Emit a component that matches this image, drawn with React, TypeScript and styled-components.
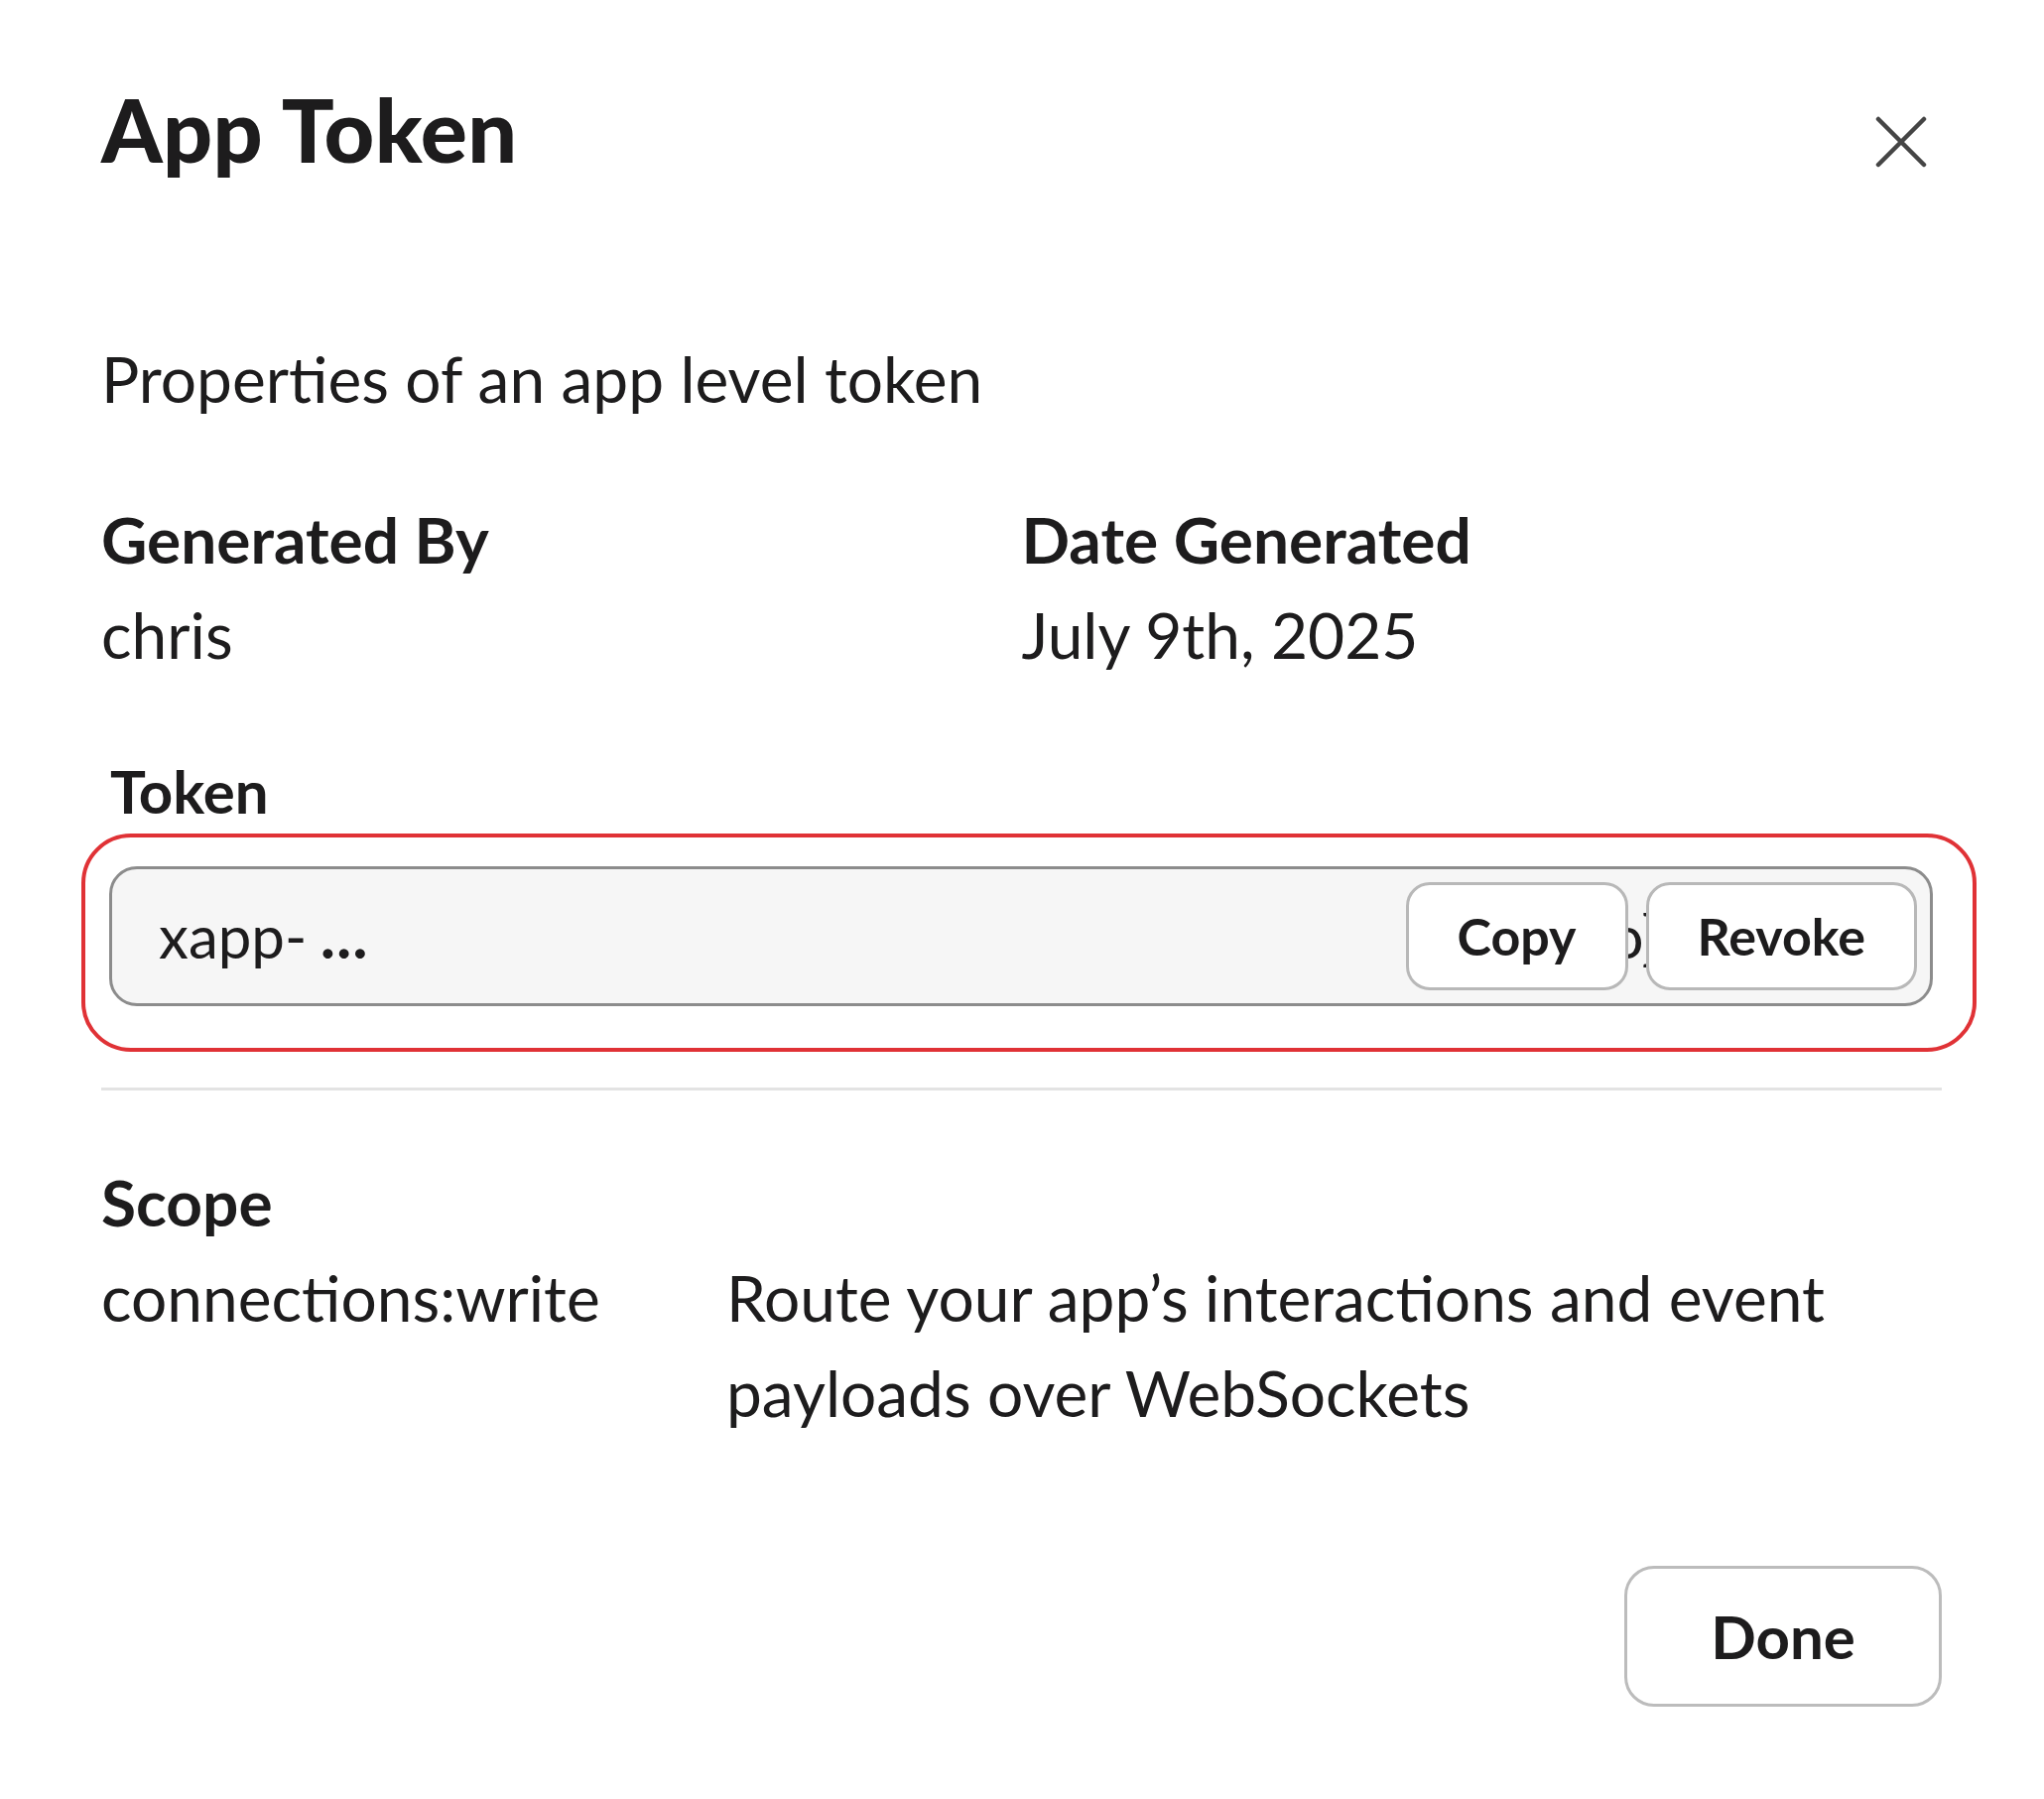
import React from "react";
import styled, { createGlobalStyle } from "styled-components";

const GlobalStyle = createGlobalStyle`
  html, body {
    margin: 0;
    padding: 0;
    background: #ffffff;
  }
  body {
    font-family: Lato, "Noto Sans", "Liberation Sans", sans-serif;
    color: #1d1c1d;
    -webkit-font-smoothing: antialiased;
  }
  * { box-sizing: border-box; }
`;

const Modal = styled.div`
  width: 2060px;
  min-height: 1813px;
  background: #ffffff;
  padding: 78px 103px 0 102px;
  display: flex;
  flex-direction: column;
`;

const Header = styled.header`
  display: flex;
  justify-content: space-between;
  align-items: flex-start;
`;

const Title = styled.h1`
  margin: 0;
  font-size: 88px;
  line-height: 1.2;
  font-weight: 900;
  letter-spacing: 0.3px;
  color: #1d1c1d;
`;

const CloseButton = styled.button`
  width: 52px;
  height: 52px;
  margin: 39px 15px 0 0;
  padding: 0;
  border: none;
  background: transparent;
  color: #454545;
  display: flex;
  align-items: center;
  justify-content: center;
  cursor: pointer;
`;

const Description = styled.p`
  margin: 150px 0 0;
  font-size: 64px;
  line-height: 96px;
  font-weight: 400;
`;

const MetaGrid = styled.div`
  margin-top: 66px;
  display: grid;
  grid-template-columns: 1fr 1fr;
`;

const MetaItem = styled.div`
  display: flex;
  flex-direction: column;
`;

const Label = styled.div`
  font-size: 64px;
  line-height: 96px;
  font-weight: 700;
`;

const Value = styled.div`
  font-size: 64px;
  line-height: 96px;
  font-weight: 400;
`;

const TokenSection = styled.section`
  margin-top: 64px;
  padding: 0 9px 0 8px;
`;

const TokenLabel = styled.div`
  font-size: 60px;
  line-height: 90px;
  font-weight: 700;
  padding-left: 1px;
`;

const TokenBox = styled.div`
  position: relative;
  margin-top: 31px;
  height: 141px;
  border: 3px solid #8c8c8c;
  border-radius: 28px;
  background: #f6f6f6;
  display: flex;
  align-items: center;
  justify-content: space-between;
  padding: 0 13px 0 47px;
`;

const Highlight = styled.div`
  position: absolute;
  left: -31px;
  top: -36px;
  right: -47px;
  bottom: -49px;
  border: 4px solid #e03236;
  border-radius: 50px;
  pointer-events: none;
`;

const TokenText = styled.div`
  display: flex;
  align-items: baseline;
  font-size: 60px;
  line-height: 72px;
  font-weight: 400;
  color: #1d1c1d;
`;

const Redacted = styled.span`
  display: inline-block;
  width: 14px;
`;

const Ellipsis = styled.span`
  font-weight: 900;
`;

const Actions = styled.div`
  display: flex;
  align-items: center;
  height: 109px;
`;

const ActionButton = styled.button`
  height: 109px;
  padding: 0 49px;
  border: 3px solid #b8b8b8;
  border-radius: 24px;
  background: #ffffff;
  font-family: Lato, "Noto Sans", "Liberation Sans", sans-serif;
  font-size: 52px;
  font-weight: 700;
  color: #1d1c1d;
  cursor: pointer;
`;

const Peek = styled.span`
  flex: 0 0 18px;
  width: 18px;
  overflow: hidden;
  white-space: nowrap;
  font-size: 60px;
  line-height: 72px;
  color: #1d1c1d;
  text-indent: -18px;
`;

const Divider = styled.hr`
  margin: 82px 0 0;
  border: none;
  height: 3px;
  background: #e3e3e3;
`;

const ScopeLabel = styled(Label)`
  margin-top: 65px;
`;

const ScopeRow = styled.div`
  display: grid;
  grid-template-columns: 630px 1fr;
  font-size: 64px;
  line-height: 96px;
`;

const ScopeName = styled.div`
  font-weight: 400;
`;

const ScopeDesc = styled.div`
  font-weight: 400;
`;

const Footer = styled.footer`
  margin-top: 126px;
  display: flex;
  justify-content: flex-end;
`;

const DoneButton = styled.button`
  width: 320px;
  height: 142px;
  border: 3px solid #bcbcbc;
  border-radius: 30px;
  background: #ffffff;
  font-family: Lato, "Noto Sans", "Liberation Sans", sans-serif;
  font-size: 60px;
  font-weight: 700;
  color: #1d1c1d;
  cursor: pointer;
`;

const CloseIcon = () => (
  <svg width="52" height="52" viewBox="0 0 52 52" fill="none">
    <path
      d="M3 3 L49 49 M49 3 L3 49"
      stroke="currentColor"
      strokeWidth="4.5"
      strokeLinecap="round"
    />
  </svg>
);

export default function App() {
  return (
    <>
      <GlobalStyle />
      <Modal role="dialog" aria-label="App Token">
        <Header>
          <Title>App Token</Title>
          <CloseButton aria-label="Close">
            <CloseIcon />
          </CloseButton>
        </Header>
        <Description>Properties of an app level token</Description>
        <MetaGrid>
          <MetaItem>
            <Label>Generated By</Label>
            <Value>chris</Value>
          </MetaItem>
          <MetaItem>
            <Label>Date Generated</Label>
            <Value>July 9th, 2025</Value>
          </MetaItem>
        </MetaGrid>
        <TokenSection>
          <TokenLabel>Token</TokenLabel>
          <TokenBox>
            <Highlight />
            <TokenText>
              xapp-
              <Redacted />
              <Ellipsis>…</Ellipsis>
            </TokenText>
            <Actions>
              <ActionButton>Copy</ActionButton>
              <Peek>o]</Peek>
              <ActionButton>Revoke</ActionButton>
            </Actions>
          </TokenBox>
        </TokenSection>
        <Divider />
        <ScopeLabel>Scope</ScopeLabel>
        <ScopeRow>
          <ScopeName>connections:write</ScopeName>
          <ScopeDesc>Route your app’s interactions and event payloads over WebSockets</ScopeDesc>
        </ScopeRow>
        <Footer>
          <DoneButton>Done</DoneButton>
        </Footer>
      </Modal>
    </>
  );
}
